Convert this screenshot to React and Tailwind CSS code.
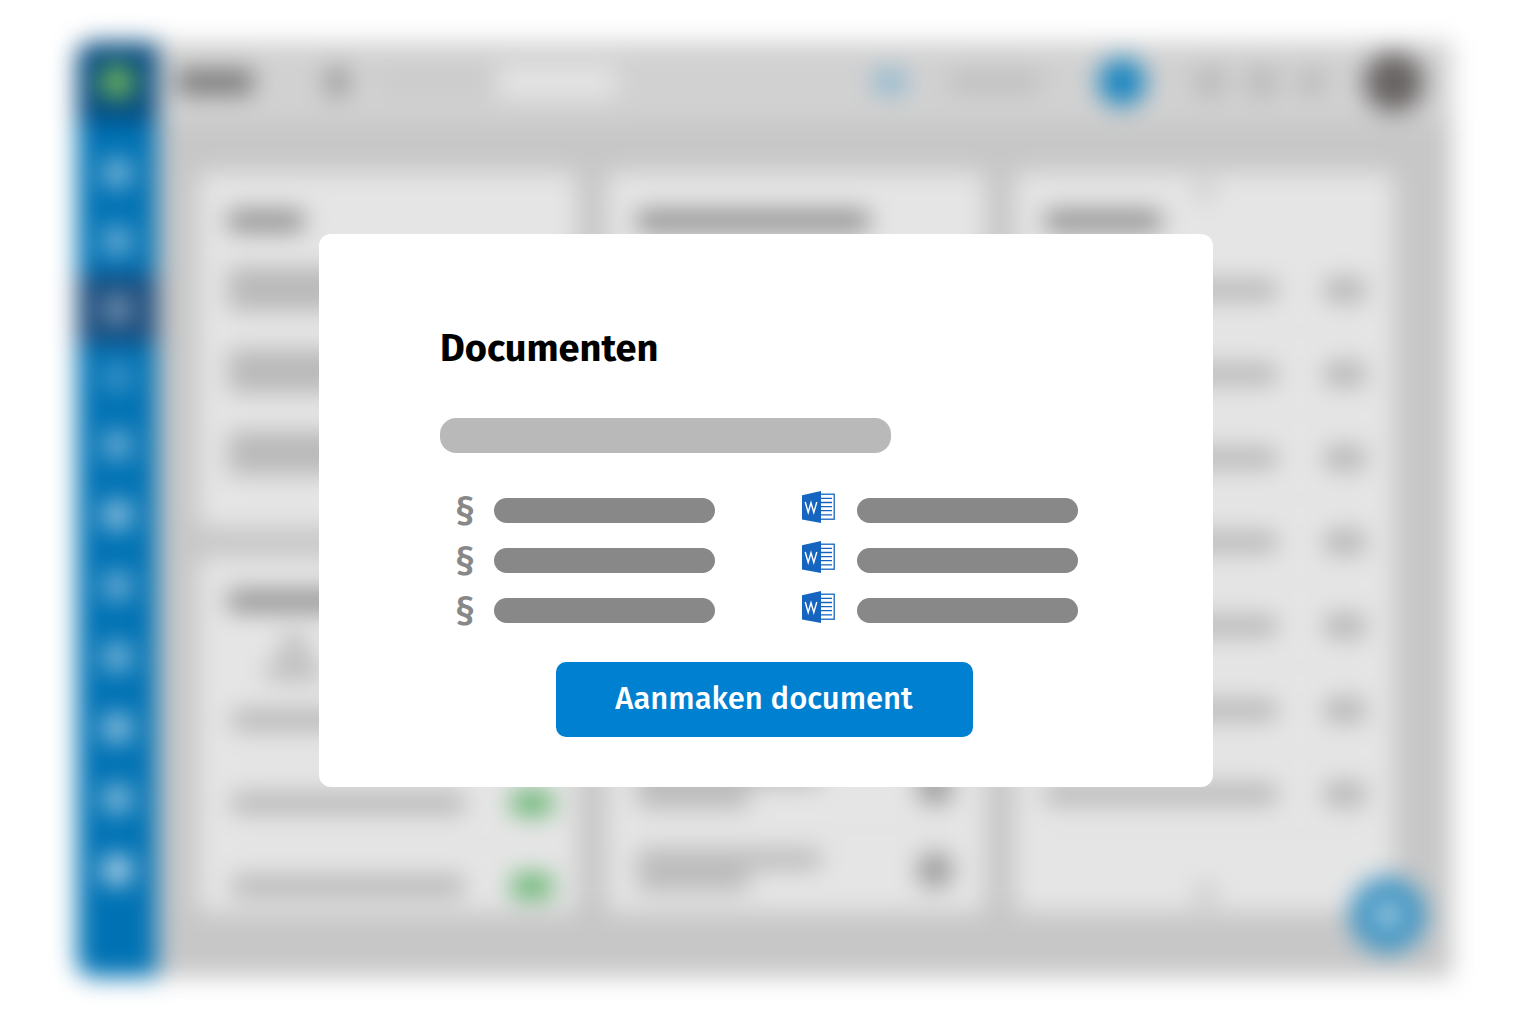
import clsx from 'clsx';

const NAV_TOP = [
  { id: 'home', tone: 'bg-white/50' },
  { id: 'inbox', tone: 'bg-white/45' },
  { id: 'files', tone: 'bg-white/40', active: true },
  { id: 'notes', tone: 'bg-white/25' },
  { id: 'people', tone: 'bg-white/45' },
];

const NAV_BOTTOM = [
  { id: 'calendar', tone: 'bg-white/60' },
  { id: 'tasks', tone: 'bg-white/45' },
  { id: 'time', tone: 'bg-white/50' },
  { id: 'mail', tone: 'bg-white/60' },
  { id: 'reports', tone: 'bg-white/55' },
  { id: 'settings', tone: 'bg-white/75' },
];

const ROWS = [1, 2, 3];

function NavGroup({ items, itemClass }) {
  return (
    <ul>
      {items.map((item) => (
        <li
          key={item.id}
          className={clsx('flex items-center justify-center', itemClass, item.active && 'bg-[#1a4b7c]')}
        >
          <span className={clsx('size-7 rounded-md', item.tone)} />
        </li>
      ))}
    </ul>
  );
}

function Sidebar() {
  return (
    <div className="flex w-20 shrink-0 flex-col overflow-hidden rounded-l-2xl bg-[#0072b4]">
      <div className="mb-[17px] flex h-20 items-center justify-center bg-[#044a80]">
        <span className="size-9 rounded-full bg-[#6cb25a]" />
      </div>
      <NavGroup items={NAV_TOP} itemClass="h-[68px]" />
      <NavGroup items={NAV_BOTTOM} itemClass="h-[71px]" />
    </div>
  );
}

function TopBar() {
  return (
    <div className="flex h-20 shrink-0 items-center bg-[#d1d1d1] pl-5 pr-7">
      <span className="h-6 w-[76px] rounded bg-[#777777]" />
      <span className="ml-[72px] h-8 w-6 rounded-full bg-[#9c9c9c]" />
      <span className="ml-8 h-5 w-28 rounded bg-[#cacaca]" />
      <span className="ml-1 h-8 w-[120px] bg-[#e4e4e4]" />
      <div className="ml-auto flex items-center">
        <span className="h-6 w-8 rounded bg-[#8fb8d0]" />
        <span className="ml-11 h-5 w-[90px] rounded bg-[#bebebe]" />
        <span className="ml-[58px] size-12 rounded-full bg-[#1c86c0]" />
        <span className="ml-[50px] size-7 rounded bg-[#b8b8b8]" />
        <span className="ml-6 size-7 rounded bg-[#b8b8b8]" />
        <span className="ml-6 size-6 rounded bg-[#b8b8b8]" />
        <span className="ml-10 size-[60px] rounded-full bg-[#696464]" />
      </div>
    </div>
  );
}

function Card({ titleClass, className = 'pt-[39px]', children }) {
  return (
    <div className={clsx('overflow-hidden rounded-lg bg-[#e5e5e5] pl-[30px] pr-7', className)}>
      <div className={clsx('h-5 rounded bg-[#8a8a8a]', titleClass)} />
      {children}
    </div>
  );
}

function TwoLines({ className }) {
  return (
    <div className="space-y-1">
      <div className={clsx('h-[18px] w-[184px] rounded', className)} />
      <div className={clsx('h-[18px] w-28 rounded', className)} />
    </div>
  );
}

function LineRow({ className, pillClass }) {
  return (
    <div className={clsx('flex items-center justify-between border-b border-[#d4d4d4]', className)}>
      <div className="h-5 w-[232px] rounded bg-[#b4b4b4]" />
      <div className={clsx('h-6 w-[42px] rounded-lg', pillClass)} />
    </div>
  );
}

function Dashboard() {
  return (
    <div aria-hidden="true" className="flex h-screen min-h-[1021px] pb-11 pl-[77px] pr-20 pt-[42px] blur-[12px]">
      <Sidebar />
      <div className="relative flex flex-1 flex-col bg-[#c7c7c7]">
        <TopBar />
        <div className="grid min-h-0 flex-1 grid-cols-3 gap-[30px] pb-[65px] pl-[41px] pr-[58px] pt-[50px]">
          <div className="grid min-h-0 grid-rows-2 gap-[30px]">
            <Card titleClass="w-[76px]">
              <div className="mt-[17px]">
                {ROWS.map((row) => (
                  <div key={row} className="flex h-[82px] items-center">
                    <TwoLines className="bg-[#b0b0b0]" />
                  </div>
                ))}
              </div>
            </Card>
            <Card className="pt-[34px]" titleClass="w-36">
              <div className="ml-[38px] mt-6 flex w-14 flex-col items-center gap-1">
                <span className="size-6 rounded bg-[#b8b8b8]" />
                <span className="h-4 w-14 rounded bg-[#b4b4b4]" />
              </div>
              <div className="-mr-1 ml-1">
                {ROWS.map((row) => (
                  <LineRow key={row} className="h-[83px]" pillClass="bg-[#62b36d]" />
                ))}
              </div>
            </Card>
          </div>
          <Card titleClass="w-[232px]">
            <div className="mt-[17px]">
              {[1, 2, 3, 4, 5, 6, 7, 8].map((row) => (
                <div key={row} className="flex h-[83px] items-center justify-between border-b border-[#d4d4d4]">
                  <TwoLines className="bg-[#b4b4b4]" />
                  <span className="mr-1 size-9 rounded-full bg-[#9a9a9a]" />
                </div>
              ))}
            </div>
          </Card>
          <Card className="relative pt-[39px]" titleClass="w-[116px]">
            <span className="absolute left-1/2 top-2 size-5 -translate-x-1/2 rounded bg-[#cccccc]" />
            <div className="mt-[17px]">
              {[1, 2, 3, 4, 5, 6, 7].map((row) => (
                <LineRow key={row} className="h-[84px]" pillClass="bg-[#b4b4b4]" />
              ))}
            </div>
            <div className="mx-auto mt-12 size-5 rounded bg-[#c8c8c8]" />
          </Card>
        </div>
        <div className="absolute bottom-6 right-[26px] flex size-[76px] items-center justify-center rounded-full bg-[#3d93c2]">
          <span className="size-6 rounded-full bg-white/70" />
        </div>
      </div>
    </div>
  );
}

function WordIcon() {
  return (
    <svg viewBox="0 0 33 32" className="h-8 w-[33px] shrink-0" aria-hidden="true">
      <rect x="17" y="3.2" width="15.2" height="25" fill="#fff" stroke="#1565c0" strokeWidth="1.3" />
      <path d="M19 7.4h11M19 11.5h11M19 15.6h11M19 19.7h11M19 23.8h11" stroke="#1565c0" strokeWidth="1.3" />
      <path d="M0 4.2 19 0v32L0 28.4z" fill="#1565c0" />
      <path d="M3.2 11 6.2 21.4 9 11.8 11.8 21.4 14.8 11" fill="none" stroke="#fff" strokeWidth="1.4" />
    </svg>
  );
}

function Placeholder() {
  return <div className="h-[25px] w-[221px] rounded-full bg-[#888888]" />;
}

function DocumentDialog() {
  return (
    <div
      role="dialog"
      aria-labelledby="dialog-title"
      className="w-full max-w-[894px] rounded-xl bg-white pb-[50px] pr-1 pt-[90px]"
    >
      <div className="pl-[121px] pr-[131px]">
        <h1 id="dialog-title" className="text-[38px] leading-[48px] font-bold text-black">
          Documenten
        </h1>
        <div className="mt-[46px] h-[35px] w-[451px] rounded-2xl bg-[#b9b9b9]" />
        <div className="mt-[45px] flex justify-between">
          <ul className="space-y-[25px] pl-2">
            {ROWS.map((row) => (
              <li key={row} className="flex h-[25px] items-center gap-3">
                <span className="w-[34px] text-center text-[38px] leading-[25px] font-medium text-[#888888]">§</span>
                <Placeholder />
              </li>
            ))}
          </ul>
          <ul className="space-y-[25px]">
            {ROWS.map((row) => (
              <li key={row} className="flex h-[25px] items-end gap-[22px]">
                <WordIcon />
                <Placeholder />
              </li>
            ))}
          </ul>
        </div>
      </div>
      <button
        type="button"
        className="mx-auto mt-[39px] block h-[75px] w-[417px] rounded-[10px] bg-[#0080d0] text-[31px] font-medium text-white"
      >
        Aanmaken document
      </button>
    </div>
  );
}

export default function App() {
  return (
    <div className="relative overflow-hidden bg-white font-['Fira_Sans','Noto_Sans',sans-serif]">
      <Dashboard />
      <div className="absolute inset-0 flex items-center justify-center">
        <DocumentDialog />
      </div>
    </div>
  );
}
